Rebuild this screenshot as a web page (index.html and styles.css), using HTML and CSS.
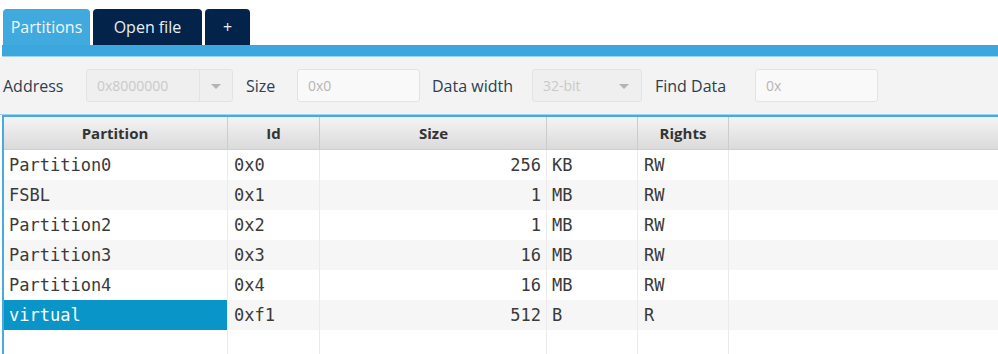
FILE: index.html
```html
<!DOCTYPE html>
<html lang="en">
<head>
    <meta charset="UTF-8">
    <title>Partitions</title>
    <link rel="stylesheet" href="styles.css">
</head>
<body>
    <div class="tabs">
        <div class="tab active">Partitions</div>
        <div class="tab tab-file">Open file</div>
        <div class="tab tab-add">+</div>
    </div>
    <div class="tab-bar"></div>

    <div class="toolbar">
        <label class="lbl lbl-address">Address</label>
        <div class="combo combo-address">
            <span class="combo-value">0x8000000</span>
            <span class="combo-arrow"></span>
        </div>
        <label class="lbl lbl-size">Size</label>
        <div class="field field-size">0x0</div>
        <label class="lbl lbl-width">Data width</label>
        <div class="combo combo-width">
            <span class="combo-value">32-bit</span>
            <span class="combo-arrow"></span>
        </div>
        <label class="lbl lbl-find">Find Data</label>
        <div class="field field-find">0x</div>
    </div>

    <div class="table">
        <div class="row head">
            <div class="cell c-name">Partition</div>
            <div class="cell c-id">Id</div>
            <div class="cell c-size">Size</div>
            <div class="cell c-unit"></div>
            <div class="cell c-rights">Rights</div>
            <div class="cell c-fill"></div>
        </div>
        <div id="rows"></div>
    </div>

    <script>
        const partitions = [
            { name: 'Partition0', id: '0x0', size: '256', unit: 'KB', rights: 'RW' },
            { name: 'FSBL', id: '0x1', size: '1', unit: 'MB', rights: 'RW' },
            { name: 'Partition2', id: '0x2', size: '1', unit: 'MB', rights: 'RW' },
            { name: 'Partition3', id: '0x3', size: '16', unit: 'MB', rights: 'RW' },
            { name: 'Partition4', id: '0x4', size: '16', unit: 'MB', rights: 'RW' },
            { name: 'virtual', id: '0xf1', size: '512', unit: 'B', rights: 'R', selected: true },
            { name: '', id: '', size: '', unit: '', rights: '' }
        ];

        const container = document.getElementById('rows');
        partitions.forEach((p, i) => {
            const row = document.createElement('div');
            row.className = 'row' + (i % 2 ? ' odd' : '');
            row.innerHTML = `
                <div class="cell c-name${p.selected ? ' selected' : ''}">${p.name}</div>
                <div class="cell c-id">${p.id}</div>
                <div class="cell c-size">${p.size}</div>
                <div class="cell c-unit">${p.unit}</div>
                <div class="cell c-rights">${p.rights}</div>
                <div class="cell c-fill"></div>
            `;
            container.appendChild(row);
        });
    </script>
</body>
</html>
```

FILE: styles.css
```css
* {
    margin: 0;
    padding: 0;
    box-sizing: border-box;
}

body {
    font-family: "Open Sans", "Noto Sans", sans-serif;
    background: #ffffff;
    color: #333;
    width: 998px;
    height: 354px;
    overflow: hidden;
}

/* tabs */
.tabs {
    display: flex;
    gap: 3px;
    padding: 9px 0 0 3px;
    height: 45px;
}

.tab {
    height: 36px;
    border-radius: 4px 4px 0 0;
    background: #03234a;
    color: #e8eef5;
    font-size: 16px;
    line-height: 36px;
    text-align: center;
}

.tab.active {
    width: 87px;
    background: #40a9dd;
    color: #f2f8fc;
}

.tab-file {
    width: 109px;
}

.tab-add {
    width: 45px;
}

.tab-bar {
    height: 12px;
    margin-left: 2px;
    background: #3ca7dd;
    border-bottom: 1px solid #9fd3ee;
}

/* toolbar */
.toolbar {
    display: flex;
    align-items: center;
    height: 58px;
    padding-left: 3px;
    background: #f3f3f3;
    border-bottom: 1px solid #9fd3ee;
}

.lbl {
    font-size: 16px;
    color: #2d3e50;
}

.lbl-address { width: 83px; }
.lbl-size { width: 51px; margin-left: 13px; }
.lbl-width { width: 100px; margin-left: 12px; }
.lbl-find { width: 100px; margin-left: 13px; }

.combo,
.field {
    display: flex;
    align-items: center;
    height: 33px;
    border: 1px solid #e3e3e3;
    border-radius: 3px;
    font-size: 14px;
    color: #c9c9c9;
}

.combo {
    background: #efefef;
}

.combo-address { width: 147px; }
.combo-width { width: 110px; }

.combo-value {
    flex: 1;
    padding-left: 10px;
}

.combo-arrow {
    width: 33px;
    height: 100%;
    border-left: 1px solid #e3e3e3;
    position: relative;
}

.combo-width .combo-arrow {
    border-left: none;
}

.combo-arrow::after {
    content: "";
    position: absolute;
    left: 11px;
    top: 14px;
    border-left: 5px solid transparent;
    border-right: 5px solid transparent;
    border-top: 5px solid #b4b4b4;
}

.field {
    background: #f9f9f9;
    padding-left: 10px;
    color: #b5b5b5;
}

.field-size { width: 123px; }
.field-find { width: 123px; }

/* table */
.table {
    margin-left: 2px;
    border-left: 2px solid #47abdf;
    border-top: 2px solid #47abdf;
}

.row {
    display: flex;
    height: 30px;
    background: #ffffff;
    font-family: "DejaVu Sans Mono", monospace;
    font-size: 17px;
    color: #3a3a3a;
}

.row.odd {
    background: #f6f6f6;
}

.row.head {
    height: 33px;
    background: linear-gradient(#f4f4f4, #dadada);
    border-bottom: 1px solid #cfcfcf;
    font-family: "Open Sans", "Noto Sans", sans-serif;
    font-weight: bold;
    font-size: 15px;
    color: #333;
}

.cell {
    display: flex;
    align-items: center;
    padding: 0 6px;
    border-right: 1px solid #ebebeb;
    white-space: nowrap;
}

.head .cell {
    justify-content: center;
    border-right: 1px solid #cccccc;
}

.c-name { width: 224px; padding-left: 5px; }
.c-id { width: 92px; }
.c-size { width: 227px; justify-content: flex-end; padding-right: 5px; }
.c-unit { width: 91px; padding-left: 5px; }
.c-rights { width: 91px; }
.c-fill { flex: 1; border-right: none; }

.head .c-fill {
    border-right: none;
}

.cell.selected {
    background: #0a95c8;
    color: #ffffff;
}
```
